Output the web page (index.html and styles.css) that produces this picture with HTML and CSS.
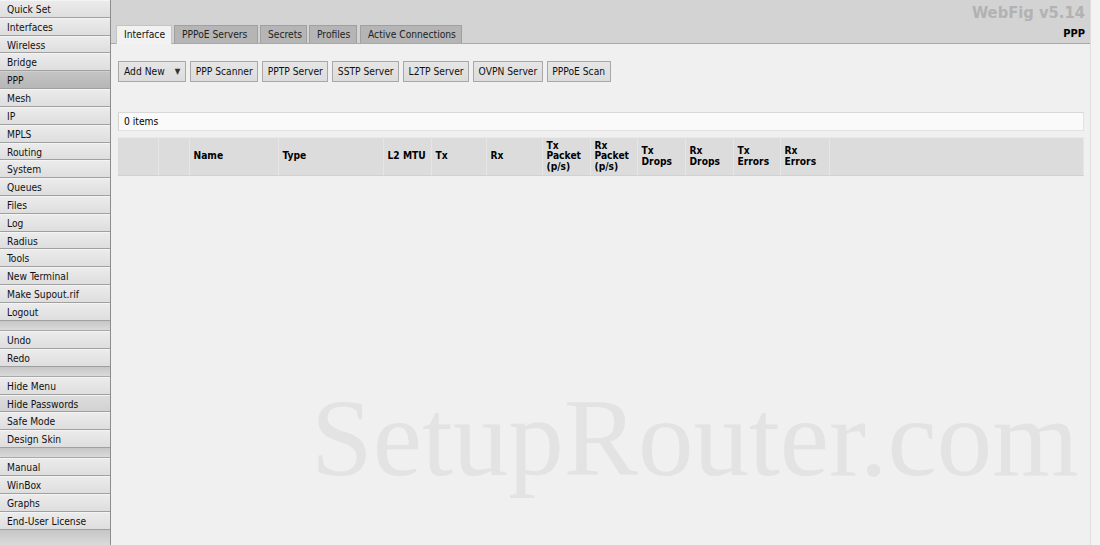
FILE: index.html
```html
<!DOCTYPE html>
<html>
<head>
<meta charset="utf-8">
<title>WebFig - PPP</title>
<link rel="stylesheet" href="styles.css">
</head>
<body>
<div class="page">
  <nav class="sidebar">
    <div class="item">Quick Set</div>
    <div class="item">Interfaces</div>
    <div class="item">Wireless</div>
    <div class="item">Bridge</div>
    <div class="item active">PPP</div>
    <div class="item">Mesh</div>
    <div class="item">IP</div>
    <div class="item">MPLS</div>
    <div class="item">Routing</div>
    <div class="item">System</div>
    <div class="item">Queues</div>
    <div class="item">Files</div>
    <div class="item">Log</div>
    <div class="item">Radius</div>
    <div class="item">Tools</div>
    <div class="item">New Terminal</div>
    <div class="item">Make Supout.rif</div>
    <div class="item">Logout</div>
    <div class="sep"></div>
    <div class="item">Undo</div>
    <div class="item">Redo</div>
    <div class="sep"></div>
    <div class="item">Hide Menu</div>
    <div class="item hover">Hide Passwords</div>
    <div class="item">Safe Mode</div>
    <div class="item">Design Skin</div>
    <div class="sep"></div>
    <div class="item">Manual</div>
    <div class="item">WinBox</div>
    <div class="item">Graphs</div>
    <div class="item">End-User License</div>
    <div class="sep last"></div>
  </nav>
  <main class="main">
    <header class="header">
      <div class="tabs">
        <div class="tab current t-interface">Interface</div>
        <div class="tab t-pppoe">PPPoE Servers</div>
        <div class="tab t-secrets">Secrets</div>
        <div class="tab t-profiles">Profiles</div>
        <div class="tab t-active">Active Connections</div>
      </div>
      <div class="titles">
        <div class="brand">WebFig v5.14</div>
        <div class="section">PPP</div>
      </div>
    </header>
    <section class="content">
      <div class="toolbar">
        <div class="btn addnew"><span>Add New</span><span class="arrow">&#9660;</span></div>
        <div class="btn">PPP Scanner</div>
        <div class="btn">PPTP Server</div>
        <div class="btn">SSTP Server</div>
        <div class="btn">L2TP Server</div>
        <div class="btn">OVPN Server</div>
        <div class="btn">PPPoE Scan</div>
      </div>
      <div class="count">0 items</div>
      <table class="grid">
        <colgroup>
          <col class="c40"><col class="c31"><col class="c89"><col class="c105"><col class="c48">
          <col class="c55"><col class="c56"><col class="c48"><col class="c47"><col class="c48">
          <col class="c48"><col class="c47"><col class="c49"><col>
        </colgroup>
        <tr>
          <th></th><th></th><th>Name</th><th>Type</th><th>L2 MTU</th><th>Tx</th><th>Rx</th>
          <th>Tx<br>Packet<br>(p/s)</th><th>Rx<br>Packet<br>(p/s)</th>
          <th>Tx<br>Drops</th><th>Rx<br>Drops</th><th>Tx<br>Errors</th><th>Rx<br>Errors</th><th></th>
        </tr>
      </table>
      <div class="watermark">SetupRouter.com</div>
    </section>
  </main>
  <div class="scroll"></div>
</div>
</body>
</html>
```

FILE: styles.css
```css
html, body {
  margin: 0;
  padding: 0;
  background: #f0f0f0;
}
body {
  font-family: "DejaVu Sans Condensed", "DejaVu Sans", sans-serif;
  font-stretch: condensed;
  font-size: 10.2px;
  color: #000;
}
.page {
  display: flex;
  width: 1100px;
  height: 545px;
  overflow: hidden;
}
.sidebar {
  width: 110px;
  flex: none;
  border-right: 1px solid #8c8c8c;
  background: #d0d0d0;
  display: flex;
  flex-direction: column;
}
.item {
  box-sizing: border-box;
  height: 17.82px;
  line-height: 17px;
  padding-left: 7px;
  background: linear-gradient(#ebebeb, #dedede);
  border-bottom: 1px solid #a0a0a0;
  border-top: 1px solid #f4f4f4;
  white-space: nowrap;
  color: #111;
}
.item.active {
  background: linear-gradient(#c4c4c4, #b6b6b6);
  border-top-color: #cfcfcf;
}
.item.hover {
  background: linear-gradient(#dcdcdc, #d2d2d2);
}
.sep {
  box-sizing: border-box;
  height: 10.3px;
  background: linear-gradient(#c6c6c6, #dadada);
  border-bottom: 1px solid #a8a8a8;
}
.sep.last {
  flex: 1;
  border-bottom: none;
}
.main {
  flex: 1;
  display: flex;
  flex-direction: column;
  min-width: 0;
}
.header {
  box-sizing: border-box;
  height: 44px;
  background: #d3d3d3;
  border-bottom: 1px solid #a9a9a9;
  display: flex;
  justify-content: space-between;
  align-items: flex-end;
  padding-left: 5px;
  padding-right: 5px;
}
.tabs {
  display: flex;
  gap: 2px;
}
.tab {
  box-sizing: border-box;
  height: 18px;
  line-height: 17px;
  padding: 0 0 0 7px;
  background: #b5b5b5;
  border: 1px solid #a0a0a0;
  border-bottom: none;
  color: #222;
  white-space: nowrap;
}
.t-interface { width: 56px; }
.t-pppoe { width: 84px; }
.t-secrets { width: 47px; }
.t-profiles { width: 48px; margin-right: 1px; }
.t-active { width: 102px; }
.tab.current {
  background: #f2f2f2;
  border-color: #c4c4c4;
  height: 19px;
  margin-bottom: -1px;
  color: #111;
}
.titles {
  display: flex;
  flex-direction: column;
  align-items: flex-end;
  align-self: stretch;
  padding-top: 3px;
}
.brand {
  font-weight: bold;
  font-size: 16.4px;
  color: #b2b2b2;
  line-height: 20px;
}
.section {
  font-weight: bold;
  font-size: 11px;
  line-height: 14px;
  margin-top: 4px;
  color: #000;
}
.content {
  flex: 1;
  position: relative;
  padding: 17px 6px 0 7px;
  background: #f0f0f0;
}
.toolbar {
  display: flex;
  gap: 4px;
}
.btn {
  box-sizing: border-box;
  height: 21px;
  line-height: 19px;
  padding: 0 4.5px;
  background: linear-gradient(#e6e6e6, #dcdcdc);
  border: 1px solid #a8a8a8;
  color: #111;
  white-space: nowrap;
}
.btn.addnew {
  display: flex;
  gap: 10px;
  padding: 0 5px 0 5px;
}
.arrow {
  font-size: 8px;
  color: #333;
}
.count {
  box-sizing: border-box;
  margin-top: 30px;
  height: 19px;
  line-height: 17px;
  padding-left: 5px;
  background: #fafafa;
  border: 1px solid #e2e2e2;
  border-top-color: #d8d8d8;
  border-left-color: #d0d0d0;
}
.grid {
  margin-top: 6px;
  width: 100%;
  table-layout: fixed;
  border-collapse: collapse;
  background: #dcdcdc;
  border-top: 1px solid #e9e9e9;
}
.grid th {
  height: 37px;
  padding: 0 0 0 4px;
  text-align: left;
  font-weight: bold;
  line-height: 10.5px;
  border-right: 1px solid #e6e6e6;
  border-bottom: 1px solid #d2d2d2;
  vertical-align: middle;
}
.c40 { width: 40px; }
.c31 { width: 31px; }
.c89 { width: 89px; }
.c105 { width: 105px; }
.c48 { width: 48px; }
.c55 { width: 55px; }
.c56 { width: 56px; }
.c47 { width: 47px; }
.c49 { width: 49px; }
.watermark {
  position: absolute;
  left: 200px;
  top: 339px;
  font-family: "Liberation Serif", serif;
  font-stretch: normal;
  font-size: 111px;
  line-height: 110px;
  color: #e3e3e3;
  white-space: nowrap;
}
.scroll {
  width: 9px;
  flex: none;
  background: #f3f3f3;
  border-left: 1px solid #dedede;
}
```
